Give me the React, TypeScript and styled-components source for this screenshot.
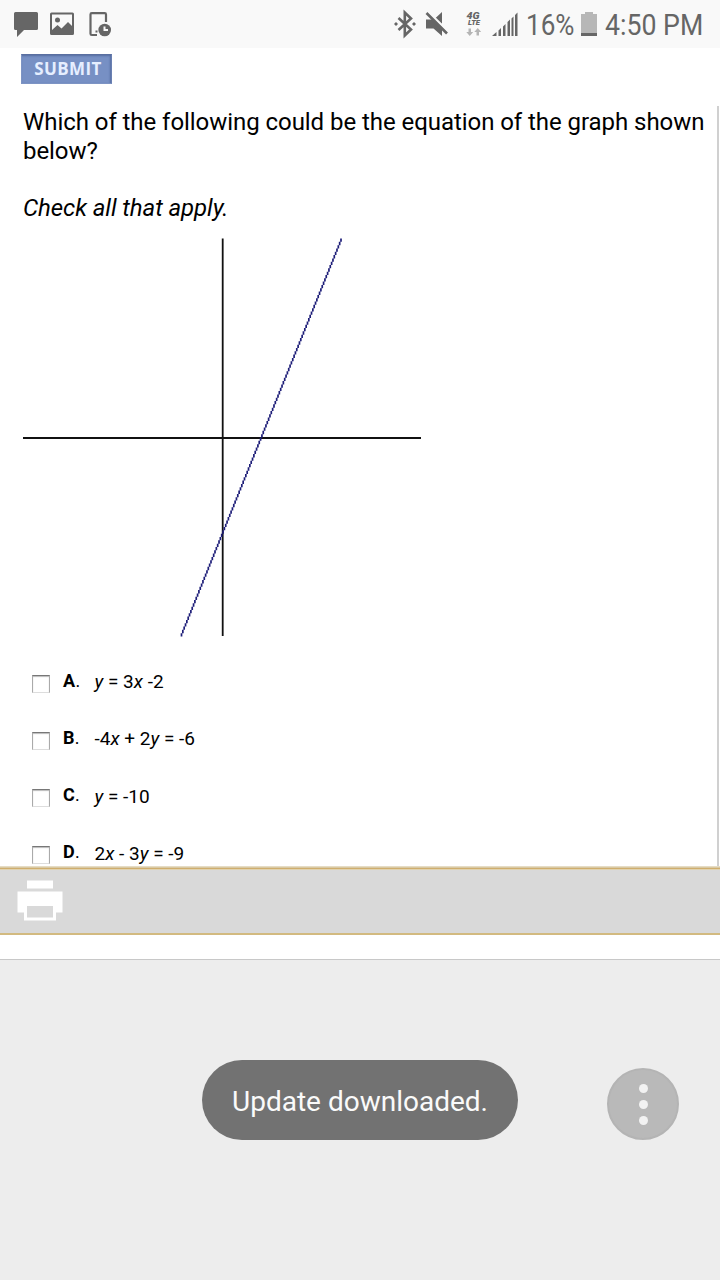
import React from 'react';
import styled, { createGlobalStyle } from 'styled-components';

const GlobalStyle = createGlobalStyle`
  * { box-sizing: border-box; }
  body { margin: 0; background: #ededed; font-family: Roboto, "Liberation Sans", sans-serif; color: #000; }
  svg { display: block; flex: none; }
`;

const Screen = styled.div`
  position: relative;
  width: 720px;
  height: 1280px;
  overflow: hidden;
  display: flex;
  flex-direction: column;
  background: #ededed;
`;

const StatusBar = styled.header`
  height: 48px;
  flex: none;
  display: flex;
  justify-content: space-between;
  background: #f9f9f9;
`;

const StatusText = styled.span<{ $width: number; $scale: number; $gap?: number }>`
  display: block;
  width: ${p => p.$width}px;
  margin-right: ${p => p.$gap ?? 0}px;
  font-size: 30px;
  line-height: 50px;
  white-space: nowrap;
  color: #666;
  transform: scaleX(${p => p.$scale});
  transform-origin: left;
`;

const StatusGroup = styled.div`
  display: flex;
`;

const BatteryIcon = styled.svg`
  margin-right: 7px;
`;

const Page = styled.main`
  height: 818px;
  flex: none;
  overflow: hidden;
  background: #fff;
`;

const SubmitButton = styled.button`
  display: block;
  width: 91px;
  height: 30px;
  margin: 6px 0 0 21px;
  padding: 0 0 0 3px;
  border: 1px solid;
  border-color: #5a6fa0 #6a80b2 #7d94c4 #7d94c4;
  border-radius: 0;
  background: #7790c4;
  box-shadow: inset -1px 1px 2px #566da0;
  color: #e6eeff;
  font: 700 17px/28px "Open Sans", sans-serif;
  letter-spacing: 0.4px;
  white-space: nowrap;
`;

const Frame = styled.section`
  width: 719px;
  height: 762px;
  margin-top: 22px;
  padding-left: 23px;
  border-right: 2px solid #d0d0d0;
`;

const Question = styled.p`
  margin: 0;
  padding-top: 2px;
  font-size: 24px;
  line-height: 29px;
  letter-spacing: -0.055px;
  white-space: nowrap;
`;

const Hint = styled.p`
  margin: 28px 0 0;
  font-size: 24px;
  line-height: 29px;
  letter-spacing: -0.08px;
  font-style: italic;
`;

const Graph = styled.svg`
  margin-top: 15px;
`;

const Choices = styled.ul`
  list-style: none;
  margin: 0;
  padding: 25px 0 0 9px;
`;

const Choice = styled.li`
  display: flex;
  height: 57.3px;
  font-size: 18px;
  line-height: 22px;
`;

const Checkbox = styled.input`
  appearance: none;
  width: 18px;
  height: 18px;
  margin: 11.500px 13px 0 0;
  border: 1px solid;
  border-color: #777 #aaa #ddd #aaa;
  box-shadow: inset 0 1px 1px #bbb;
  background: #fff;
`;

const Letter = styled.span`
  width: 31.5px;
  padding-top: 6.500px;
  letter-spacing: 0.3px;
`;

const Equation = styled.span`
  padding-top: 8px;
  font-size: 19px;
`;

const Toolbar = styled.div`
  height: 69px;
  flex: none;
  padding: 14px 17px;
  border-bottom: 2px solid #d2ba80;
  background: #d9d9d9;
  box-shadow: inset 0 1px #e6dcc4, inset 0 2px #d9c9a4, inset 0 3px #cfae6e, inset 0 4px #e0d2b0;
`;

const Footer = styled.div`
  height: 25px;
  flex: none;
  background: #fff;
  border-bottom: 1px solid #c8c8c8;
`;

const Toast = styled.div`
  position: absolute;
  left: 202px;
  top: 1060px;
  width: 316px;
  height: 80px;
  border-radius: 40px;
  background: #727272;
  color: #fafafa;
  font-size: 28px;
  line-height: 84px;
  text-align: center;
  white-space: nowrap;
`;

const MoreButton = styled.button`
  position: absolute;
  left: 607px;
  top: 1068px;
  width: 72px;
  height: 72px;
  padding: 0;
  border: 2px solid #b4b4b4;
  border-radius: 50%;
  background: #b9b9b9;
  display: flex;
  flex-direction: column;
  align-items: center;
  justify-content: center;
  gap: 7px;
`;

const Dot = styled.span`
  width: 9px;
  height: 9px;
  border-radius: 50%;
  background: #f2f2f2;
`;

const choices = [
  { letter: 'A', equation: <><i>y</i> = 3<i>x</i> -2</> },
  { letter: 'B', equation: <>-4<i>x</i> + 2<i>y</i> = -6</> },
  { letter: 'C', equation: <><i>y</i> = -10</> },
  { letter: 'D', equation: <>2<i>x</i> - 3<i>y</i> = -9</> },
];

// The plotted line climbs in small pixel steps.
const steps = 120;
const linePath = Array.from({ length: steps }, (_, i) => {
  const x = 318 - (i * 159.5) / (steps - 1);
  const y = 0.5 + (i * 398) / steps;
  return `M${x.toFixed(2)} ${y.toFixed(2)}v${(398 / steps).toFixed(2)}`;
}).join('');

const NotificationIcons = () => (
  <svg width="120" height="48" fill="#666">
    <path d="M15.500 12h21a1.500 1.500 0 0 1 1.500 1.500v15a1.500 1.500 0 0 1-1.500 1.500H24l-7 7v-7h-1.500a1.500 1.500 0 0 1-1.500-1.500v-15a1.500 1.500 0 0 1 1.500-1.500z" />
    <path fillRule="evenodd" d="M51.500 12.500h21a1.500 1.500 0 0 1 1.500 1.500v19.500a1.500 1.500 0 0 1-1.500 1.500h-21a1.500 1.500 0 0 1-1.500-1.500V14a1.500 1.500 0 0 1 1.500-1.500zM52 14.500V30l5.500-5 4 3.500 6.500-6.500 4 4V14.500z" />
    <circle cx="57.500" cy="20" r="2.500" />
    <path d="M97 35h-5.200q-1.300 0-1.300-1.300V14.500q0-1.300 1.300-1.300h12.900q1.300 0 1.300 1.300V22" fill="none" stroke="#666" strokeWidth="2.200" />
    <rect x="95.500" y="30.500" width="2" height="2" />
    <circle cx="104.700" cy="30" r="6.300" />
    <path d="M104.500 26.500V30h3.500" fill="none" stroke="#f9f9f9" strokeWidth="2" />
  </svg>
);

const ConnectionIcons = () => (
  <svg width="139" height="48" fill="#666">
    <path d="M11.500 18l12.500 11.500-6.200 6V12.500l6.200 6-12.500 11.500" fill="none" stroke="#666" strokeWidth="2.600" />
    <path d="M9 22l2 2-2 2-2-2zM27 22l2 2-2 2-2-2z" />
    <path d="M39 19.500h7l9 8v8.500l-8.500-7.500H39zM48 18.500l7-6.500V24z" />
    <path d="M39.500 13l20.500 20.500" stroke="#666" strokeWidth="2.600" />
    <path d="M41.700 11.500l20.500 20.500" stroke="#f9f9f9" strokeWidth="1.500" />
    <text x="79.500" y="18.600" fontSize="9" fontWeight="900" fontStyle="italic" textLength="13" lengthAdjust="spacingAndGlyphs">4G</text>
    <text x="81" y="25.200" fontSize="7" fontWeight="900" fontStyle="italic" textLength="12" lengthAdjust="spacingAndGlyphs">LTE</text>
    <path d="M81.500 28.500h2.500v3.500h2.200L82.750 36l-3.450-4h2.200zM89.500 35.500H92V32h2.200l-3.450-4-3.450 4h2.200z" fill="#b5b5b5" />
    <path d="M105 36l4.500-4v4zM111.500 30.500l2.500-2.500v8h-2.500zM116 26.500l2.500-2.500v12H116zM120.500 22l2.500-2.500V36h-2.500zM124.500 18.500l2-2V36h-2zM128 15l2.500-2.500V36H128z" />
  </svg>
);

export default function App() {
  return (
    <Screen>
      <GlobalStyle />
      <StatusBar>
        <NotificationIcons />
        <StatusGroup>
          <ConnectionIcons />
          <StatusText $width={48} $scale={0.87} $gap={7}>16%</StatusText>
          <BatteryIcon width="17" height="48">
            <path d="M0 14h4v-2h8v2h4v19H0z" fill="#b7b7b7" />
            <path d="M0 33h16v3H0z" fill="#666" />
          </BatteryIcon>
          <StatusText $width={115} $scale={0.89}>4:50 PM</StatusText>
        </StatusGroup>
      </StatusBar>
      <Page>
        <SubmitButton>SUBMIT</SubmitButton>
        <Frame>
          <Question>
            Which of the following could be the equation of the graph shown
            <br />
            below?
          </Question>
          <Hint>Check all that apply.</Hint>
          <Graph width="400" height="400" fill="none">
            <path d="M0 200h398M199.700 0.500v397.500" stroke="#111" strokeWidth="1.800" />
            <path d={linePath} stroke="#1d1d78" strokeWidth="1.700" />
          </Graph>
          <Choices>
            {choices.map(c => (
              <Choice key={c.letter}>
                <Checkbox type="checkbox" aria-label={c.letter} />
                <Letter><b>{c.letter}</b>.</Letter>
                <Equation>{c.equation}</Equation>
              </Choice>
            ))}
          </Choices>
        </Frame>
      </Page>
      <Toolbar>
        <svg width="46" height="42" viewBox="17 880 46 42" fill="#fff">
          <path fillRule="evenodd" d="M27 880.500h26v8H27zM17.500 891.500h45v21H56v8H24v-8h-6.500zM27 906v11.500h26V906z" />
        </svg>
      </Toolbar>
      <Footer />
      <Toast>Update downloaded.</Toast>
      <MoreButton aria-label="More options"><Dot /><Dot /><Dot /></MoreButton>
    </Screen>
  );
}
